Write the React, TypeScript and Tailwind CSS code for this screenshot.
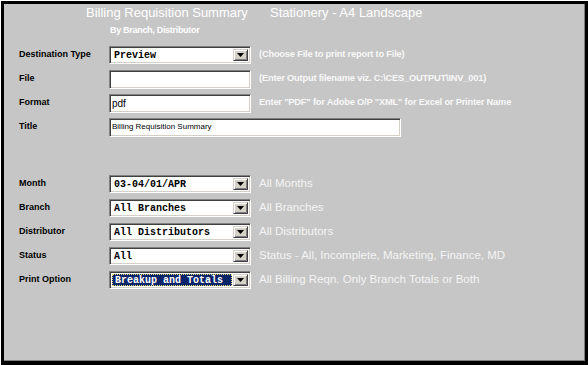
const sans = "font-['Liberation_Sans',Arial,sans-serif]";
const mono = "font-['Liberation_Mono','Courier_New',monospace]";

// sunken win9x field edge
const sunken =
  "border border-t-[#808080] border-l-[#808080] border-b-white border-r-white shadow-[inset_1px_1px_0_#404040,inset_-1px_-1px_0_#d4d0c8]";

function Arrow() {
  return (
    <div className="flex h-full w-[15px] items-center justify-center border border-t-[#d4d0c8] border-l-[#d4d0c8] border-b-[#404040] border-r-[#404040] bg-[#d4d0c8] shadow-[inset_1px_1px_0_#fff,inset_-1px_-1px_0_#808080]">
      <svg width="7" height="4" viewBox="0 0 7 4">
        <path d="M0 0h7L3.5 4z" fill="#000" />
      </svg>
    </div>
  );
}

function Select({ value, active }: { value: string; active?: boolean }) {
  return (
    <div className={`flex h-[18px] w-[142px] items-stretch bg-white p-[2px] ${sunken}`}>
      <div className="flex flex-1 items-center pr-[1px]">
        <div
          className={`flex h-full flex-1 items-center pl-[2px] text-[10px] font-bold ${mono} ${
            active ? "border border-dotted border-[#e8e070] bg-[#0a246a] text-white" : "text-black"
          }`}
        >
          {value}
        </div>
      </div>
      <Arrow />
    </div>
  );
}

function Input({ value, wide }: { value?: string; wide?: boolean }) {
  return (
    <div
      className={`flex h-[19px] items-center bg-white pl-[2px] ${sunken} ${
        wide ? "w-[292px] text-[8px]" : "w-[142px] text-[10px]"
      } ${sans} text-black`}
    >
      {value}
    </div>
  );
}

function Row({
  label,
  children,
  hint,
  big,
}: {
  label: string;
  children: React.ReactNode;
  hint?: string;
  big?: boolean;
}) {
  return (
    <div className="flex h-[24px] items-center">
      <div className={`w-[90px] text-[9px] font-bold text-black ${sans}`}>{label}</div>
      {children}
      {hint && (
        <div
          className={`ml-[8px] whitespace-nowrap ${sans} ${
            big ? "text-[11.5px] text-[#f4f4f4]" : "text-[9.3px] font-bold tracking-[-0.2px] text-[#f8f8f8]"
          }`}
        >
          {hint}
        </div>
      )}
    </div>
  );
}

export default function App() {
  return (
    <div className="h-[365px] w-[588px] overflow-hidden border-l border-t border-white bg-black pl-[3px] pt-[3px]">
      <div className="h-[357px] w-[581px] border-b border-r border-[#808080] bg-[#c6c6c6]">
        <div className={`flex h-[17px] items-center pl-[82px] text-[13px] leading-[17px] text-white ${sans}`}>
          <span className="w-[184px] whitespace-nowrap">Billing Requisition Summary</span>
          <span className="whitespace-nowrap">Stationery - A4 Landscape</span>
        </div>
        <div className={`mt-[3px] h-[12px] pl-[106px] text-[9px] font-bold leading-[12px] tracking-[-0.3px] text-white ${sans}`}>
          By Branch, Distributor
        </div>

        <div className="mt-[7px] pl-[15px]">
          <Row label="Destination Type" hint="(Choose File to print report to File)">
            <Select value="Preview" />
          </Row>
          <Row label="File" hint="(Enter Output filename viz. C:\CES_OUTPUT\INV_001)">
            <Input />
          </Row>
          <Row label="Format" hint={'Enter "PDF" for Adobe O/P "XML" for Excel or Printer Name'}>
            <Input value="pdf" />
          </Row>
          <Row label="Title">
            <Input value="Billing Requisition Summary" wide />
          </Row>

          <div className="mt-[33px]">
            <Row label="Month" hint="All Months" big>
              <Select value="03-04/01/APR" />
            </Row>
            <Row label="Branch" hint="All Branches" big>
              <Select value="All Branches" />
            </Row>
            <Row label="Distributor" hint="All Distributors" big>
              <Select value="All Distributors" />
            </Row>
            <Row label="Status" hint="Status - All, Incomplete, Marketing, Finance, MD" big>
              <Select value="All" />
            </Row>
            <Row label="Print Option" hint="All Billing Reqn. Only Branch Totals or Both" big>
              <Select value="Breakup and Totals" active />
            </Row>
          </div>
        </div>
      </div>
    </div>
  );
}
